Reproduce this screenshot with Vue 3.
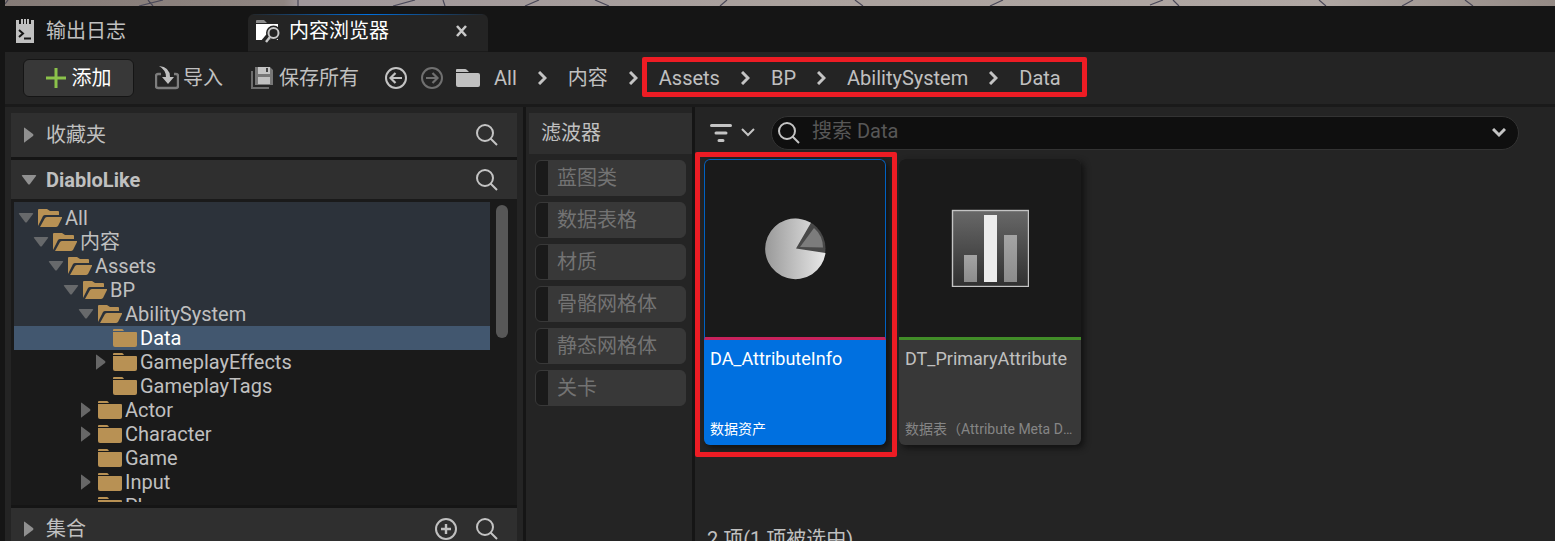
<script setup>
const crumbsRoot = ['All', '内容']
const crumbsPath = ['Assets', 'BP', 'AbilitySystem', 'Data']

const tree = [
  { name: 'All', level: 0, state: 'open' },
  { name: '内容', level: 1, state: 'open' },
  { name: 'Assets', level: 2, state: 'open' },
  { name: 'BP', level: 3, state: 'open' },
  { name: 'AbilitySystem', level: 4, state: 'open' },
  { name: 'Data', level: 5, state: 'leaf', selected: true },
  { name: 'GameplayEffects', level: 5, state: 'closed' },
  { name: 'GameplayTags', level: 5, state: 'leaf' },
  { name: 'Actor', level: 4, state: 'closed' },
  { name: 'Character', level: 4, state: 'closed' },
  { name: 'Game', level: 4, state: 'leaf' },
  { name: 'Input', level: 4, state: 'closed' },
  { name: 'Player', level: 4, state: 'leaf' }
]

const filters = ['蓝图类', '数据表格', '材质', '骨骼网格体', '静态网格体', '关卡']
</script>

<template>
  <div class="shell">
    <svg class="viewport-edge" viewBox="0 0 1550 6" preserveAspectRatio="none" aria-hidden="true">
      <defs>
        <linearGradient id="floor" x1="0" x2="1" y1="0" y2="0">
          <stop offset="0" stop-color="#857b77" />
          <stop offset="0.18" stop-color="#8f8581" />
          <stop offset="0.19" stop-color="#a0979a" />
          <stop offset="0.5" stop-color="#aaa19d" />
          <stop offset="0.85" stop-color="#b0a7a3" />
          <stop offset="1" stop-color="#958b86" />
        </linearGradient>
      </defs>
      <rect width="1550" height="6" fill="url(#floor)" />
      <g stroke="#4a4858" stroke-width="1.2" fill="none">
        <path d="M0 4L3 0M134 6L158 0M143 0L148 6M293 0V6M388 6L410 0M438 0L440 6M520 6L534 0M590 0L604 6M715 6L722 0M850 0L858 6M985 6L998 0M1145 5L1158 0M1168 0L1174 6M1314 0L1321 6M1397 6L1408 0M1460 0L1468 6" />
      </g>
    </svg>

    <nav class="tabs">
      <button class="tab" type="button">
        <svg width="18" height="24" viewBox="0 0 18 24" aria-hidden="true">
          <path d="M0 1h3v4h2V0h2v5h1V0h2v5h1V0h2v5h2V1h3v23H0z" fill="#c0c0c0" />
          <path d="M3 11l4 3.5L3 18M8 19.5h7" stroke="#151515" stroke-width="2" fill="none" />
        </svg>
        <span>输出日志</span>
      </button>
      <div class="tab active">
        <svg width="26" height="26" viewBox="0 0 26 26" aria-hidden="true">
          <path d="M1 5V3q0-1 1-1h7l3 3z" fill="#8c8c8c" />
          <path d="M1 6h22v16H1z" fill="#fff" />
          <circle cx="18.500" cy="15" r="7.500" fill="#242424" />
          <path d="M14 18l-5 6" stroke="#242424" stroke-width="6" />
          <circle cx="18.500" cy="15" r="5" fill="none" stroke="#c8c8c8" stroke-width="2" />
          <path d="M15 19l-4 5" stroke="#c8c8c8" stroke-width="2.400" />
        </svg>
        <span>内容浏览器</span>
        <button class="close" type="button" aria-label="关闭">
          <svg width="12" height="12" viewBox="0 0 12 12"><path d="M1 1l9 10M10 1L1 11" stroke="#c8c8c8" stroke-width="2.600" /></svg>
        </button>
      </div>
    </nav>

    <header class="toolbar">
      <button class="add" type="button">
        <svg width="20" height="20" viewBox="0 0 20 20" aria-hidden="true"><path d="M10 0v20M0 10h20" stroke="#8bc24a" stroke-width="3" /></svg>
        <span>添加</span>
      </button>
      <button class="tool import" type="button">
        <svg width="24" height="24" viewBox="0 0 24 24" aria-hidden="true">
          <path d="M6 8H3q-2 0-2 2v10q0 2 2 2h18q2 0 2-2V10q0-2-2-2h-2" fill="none" stroke="#7d7d7d" stroke-width="2.400" />
          <path d="M4 0q11 1 11 11h4l-6 7-6-7h4q0-7-7-11z" fill="#c0c0c0" />
        </svg>
        <span>导入</span>
      </button>
      <button class="tool save" type="button">
        <svg width="22" height="22" viewBox="0 0 22 22" aria-hidden="true">
          <path d="M1 4v17h17" fill="none" stroke="#6c6c6c" stroke-width="2" />
          <path d="M4 0h15l3 3v15H4z" fill="#777" />
          <path d="M7 0h12v7H7z" fill="#c4c4c4" /><path d="M15 1h2v4h-2z" fill="#444" />
          <path d="M7 10h12v7H7z" fill="#c0c0c0" />
        </svg>
        <span>保存所有</span>
      </button>
      <button class="tool" type="button" aria-label="后退">
        <svg width="24" height="24" viewBox="0 0 24 24" fill="none" stroke="#c4c4c4" stroke-width="2"><circle cx="12" cy="12" r="10" /><path d="M18 12H7M11.500 7L6.500 12l5 5" stroke-width="2.200" /></svg>
      </button>
      <button class="tool forward" type="button" aria-label="前进">
        <svg width="24" height="24" viewBox="0 0 24 24" fill="none" stroke="#707070" stroke-width="2"><circle cx="12" cy="12" r="10" /><path d="M6 12h11M12.500 7l5 5-5 5" stroke-width="2.200" /></svg>
      </button>
      <nav class="crumbs" aria-label="路径">
        <svg class="crumb-folder" width="24" height="18" viewBox="0 0 24 18" aria-hidden="true">
          <path d="M0 3V1q0-1 1-1h8q1 0 2 1l2 2z" fill="#c0c0c0" /><path d="M0 4h22q2 0 2 2v10q0 2-2 2H2q-2 0-2-2z" fill="#c0c0c0" />
        </svg>
        <template v-for="c in crumbsRoot" :key="c">
          <a href="#">{{ c }}</a>
          <svg width="9" height="14" viewBox="0 0 9 14" aria-hidden="true"><path d="M1 1l6 6-6 6" class="chev" /></svg>
        </template>
        <span class="path">
          <template v-for="(c, i) in crumbsPath" :key="c">
            <svg v-if="i" width="9" height="14" viewBox="0 0 9 14" aria-hidden="true"><path d="M1 1l6 6-6 6" class="chev" /></svg>
            <a href="#">{{ c }}</a>
          </template>
        </span>
      </nav>
    </header>

    <main class="body">
      <aside class="sources">
        <section class="section favorites">
          <svg class="mark" width="16" height="16" viewBox="0 0 16 16" aria-hidden="true"><path d="M3 1q0-1 1 0l8 6q1 1 0 2l-8 6q-1 1-1 0z" fill="#909090" /></svg>
          <span class="title">收藏夹</span>
          <button class="icon-btn" type="button" aria-label="搜索收藏夹">
            <svg width="24" height="24" viewBox="0 0 24 24" class="lens"><circle cx="10" cy="10" r="8" /><path d="M15.500 15.500L22 22" /></svg>
          </button>
        </section>
        <section class="section project">
          <svg class="mark" width="16" height="16" viewBox="0 0 16 16" aria-hidden="true"><path d="M1 4q-1-1 1-1h12q2 0 1 1l-6 8q-1 1-2 0z" fill="#909090" /></svg>
          <strong class="title">DiabloLike</strong>
          <button class="icon-btn" type="button" aria-label="搜索路径">
            <svg width="24" height="24" viewBox="0 0 24 24" class="lens"><circle cx="10" cy="10" r="8" /><path d="M15.500 15.500L22 22" /></svg>
          </button>
        </section>
        <div class="tree-wrap">
          <ul class="tree" role="tree">
            <li
              v-for="n in tree"
              :key="n.name"
              role="treeitem"
              :aria-selected="!!n.selected"
              :class="['node', n.state, { selected: n.selected }]"
              :style="{ paddingLeft: 4 + n.level * 15 + 'px' }"
            >
              <svg class="mark" width="16" height="16" viewBox="0 0 16 16" aria-hidden="true">
                <path v-if="n.state === 'open'" d="M1 4q-1-1 1-1h12q2 0 1 1l-6 8q-1 1-2 0z" fill="#67696b" />
                <path v-else-if="n.state === 'closed'" d="M3 1q0-1 1 0l8 6q1 1 0 2l-8 6q-1 1-1 0z" fill="#676767" />
              </svg>
              <svg class="folder" width="24" height="18" viewBox="0 0 24 18" aria-hidden="true" fill="#b89154">
                <template v-if="n.state === 'open'">
                  <path d="M0 17V1q0-1 1-1h8l3 2h8q1 0 1 1v3H7q-1 0-2 1z" /><path d="M2 18L7 9q1-1 2-1h14q2 0 1 1l-4 8q-1 1-2 1z" />
                </template>
                <template v-else>
                  <path d="M0 2V1q0-1 1-1h8q1 0 2 2z" /><path d="M0 3h23q1 0 1 1v12q0 2-2 2H2q-2 0-2-2z" />
                </template>
              </svg>
              <span>{{ n.name }}</span>
            </li>
          </ul>
          <div class="scroll-rail"><div class="thumb-bar"></div></div>
        </div>
        <section class="section collections">
          <svg class="mark" width="16" height="16" viewBox="0 0 16 16" aria-hidden="true"><path d="M3 1q0-1 1 0l8 6q1 1 0 2l-8 6q-1 1-1 0z" fill="#909090" /></svg>
          <span class="title">集合</span>
          <button class="icon-btn" type="button" aria-label="添加集合">
            <svg width="24" height="24" viewBox="0 0 24 24" fill="none" stroke="#c0c0c0" stroke-width="2"><circle cx="12" cy="12" r="10" /><path d="M12 7v10M7 12h10" stroke-width="2.400" /></svg>
          </button>
          <button class="icon-btn" type="button" aria-label="搜索集合">
            <svg width="24" height="24" viewBox="0 0 24 24" class="lens"><circle cx="10" cy="10" r="8" /><path d="M15.500 15.500L22 22" /></svg>
          </button>
        </section>
      </aside>

      <aside class="filters">
        <h2>滤波器</h2>
        <div class="filter-list">
          <button v-for="f in filters" :key="f" class="filter" type="button" aria-pressed="false">{{ f }}</button>
        </div>
      </aside>

      <section class="assets">
        <div class="search-row">
          <button class="filter-menu" type="button" aria-label="筛选">
            <svg width="22" height="18" viewBox="0 0 22 18" stroke="#c4c4c4" stroke-width="3" stroke-linecap="round"><path d="M1.500 1.500h19M6 9h10M9 16.500h4" /></svg>
            <svg width="14" height="10" viewBox="0 0 14 10"><path d="M1 1l6 6 6-6" class="chev thin" /></svg>
          </button>
          <div class="search">
            <svg width="24" height="24" viewBox="0 0 24 24" class="lens" aria-hidden="true"><circle cx="10" cy="10" r="8" /><path d="M15.500 15.500L22 22" /></svg>
            <input type="text" placeholder="搜索 Data" aria-label="搜索 Data" />
            <button type="button" aria-label="搜索选项">
              <svg width="14" height="10" viewBox="0 0 14 10"><path d="M1 1l6 6 6-6" class="chev" /></svg>
            </button>
          </div>
        </div>

        <div class="cards">
          <div class="marked">
            <button class="card chosen" type="button">
              <span class="preview">
                <svg width="62" height="62" viewBox="0 0 62 62" aria-hidden="true">
                  <defs>
                    <linearGradient id="pie" x1="0" x2="1" y1="0" y2="0"><stop offset="0" stop-color="#999" /><stop offset="1" stop-color="#e8e8e8" /></linearGradient>
                  </defs>
                  <circle cx="31.500" cy="30.500" r="30" fill="#484848" />
                  <path d="M32 30.500L47 4.800A30.300 30.300 0 1 0 61.500 35z" fill="url(#pie)" />
                  <path d="M36 29L50 10A26 26 0 0 1 59 29.500z" fill="#7c7c7c" />
                </svg>
              </span>
              <span class="info">
                <span class="name">DA_AttributeInfo</span>
                <span class="kind">数据资产</span>
              </span>
            </button>
          </div>
          <button class="card table-card" type="button">
            <span class="preview">
              <svg width="78" height="78" viewBox="0 0 78 78" aria-hidden="true">
                <defs>
                  <linearGradient id="panel" x1="0" x2="0" y1="0" y2="1"><stop offset="0" stop-color="#686868" /><stop offset="1" stop-color="#303030" /></linearGradient>
                  <linearGradient id="bar" x1="0" x2="0" y1="0" y2="1"><stop offset="0" stop-color="#a4a4a4" /><stop offset="1" stop-color="#8c8c8c" /></linearGradient>
                </defs>
                <rect x="1.500" y="1.500" width="76" height="76" fill="url(#panel)" stroke="#c4c4c4" stroke-width="1.400" />
                <rect x="13" y="46" width="13" height="27" fill="url(#bar)" />
                <rect x="33" y="6" width="13" height="67" fill="#ececec" />
                <rect x="53" y="26" width="13" height="47" fill="url(#bar)" />
              </svg>
            </span>
            <span class="info">
              <span class="name">DT_PrimaryAttribute</span>
              <span class="kind">数据表（Attribute Meta Data）</span>
            </span>
          </button>
        </div>
        <p class="status">2 项(1 项被选中)</p>
      </section>
    </main>
  </div>
</template>

<style>
body {
  background: #151515;
  overflow: hidden;
}
</style>

<style scoped>
.shell {
  box-sizing: border-box;
  height: 100vh;
  padding-left: 5px;
  display: flex;
  flex-direction: column;
  overflow: hidden;
  background: #151515;
  color: #c0c0c0;
  font: 20px/24px Roboto, "Noto Sans CJK SC", sans-serif;
}
button {
  border: 0;
  padding: 0;
  margin: 0;
  background: none;
  color: inherit;
  font: inherit;
  text-align: left;
}
a {
  color: inherit;
  text-decoration: none;
}
svg {
  display: block;
  flex: none;
}
.chev {
  fill: none;
  stroke: #c4c4c4;
  stroke-width: 3;
}
.thin {
  stroke-width: 2;
}
.lens {
  fill: none;
  stroke: #c4c4c4;
  stroke-width: 2;
}

.viewport-edge {
  width: 100%;
  height: 6px;
}
.tabs {
  height: 46px;
  flex: none;
  display: flex;
  align-items: flex-end;
}
.tab {
  box-sizing: border-box;
  width: 243px;
  height: 38px;
  padding: 0 11px 4px;
  display: flex;
  align-items: center;
  gap: 12px;
}
.active {
  position: relative;
  width: 240px;
  padding: 0 20px 4px 7px;
  gap: 8px;
  border-radius: 6px 6px 0 0;
  background: #242424;
  border-bottom: 1px solid #1b1b1b;
  color: #fff;
  overflow: hidden;
}
.active::before {
  content: "";
  position: absolute;
  inset: 0 0 auto;
  height: 1px;
  background: linear-gradient(90deg, transparent, #0070e0, transparent);
}
.close {
  margin-left: auto;
}

.toolbar {
  box-sizing: border-box;
  height: 55px;
  flex: none;
  display: flex;
  align-items: center;
  padding-left: 18px;
  background: #242424;
  border-bottom: 3px solid #1a1a1a;
}
.add {
  box-sizing: border-box;
  width: 111px;
  height: 38px;
  display: flex;
  align-items: center;
  justify-content: center;
  gap: 6px;
  border: 1px solid #151515;
  border-radius: 6px;
  background: #383838;
  color: #fff;
}
.tool {
  display: flex;
  align-items: center;
  gap: 4px;
}
.import {
  margin-left: 21px;
}
.save {
  margin: 0 25px 0 28px;
  gap: 6px;
}
.forward {
  margin: 0 12px;
}
.crumbs,
.path {
  display: flex;
  align-items: center;
  gap: 21px;
}
.crumb-folder {
  margin-right: -7px;
}
.path {
  position: relative;
}
.path::after {
  content: "";
  position: absolute;
  inset: -9px -26px -7px -17px;
  border: 5px solid #ed1c24;
  border-radius: 2px;
  pointer-events: none;
}

.body {
  flex: 1;
  display: flex;
  min-height: 0;
  background: #242424;
}
.sources {
  box-sizing: border-box;
  width: 521px;
  flex: none;
  padding: 6px 6px 0;
  border-right: 3px solid #151515;
}
.section {
  box-sizing: border-box;
  display: flex;
  align-items: center;
  gap: 17px;
  padding: 0 18px 0 10px;
  background: #2f2f2f;
}
.favorites {
  height: 47px;
  border-bottom: 3px solid #151515;
}
.project {
  height: 39px;
}
.collections {
  height: 41px;
}
.title {
  margin-right: auto;
  margin-left: -8px;
}
.tree-wrap {
  display: flex;
  height: 300px;
  padding: 3px 9px 3px 3px;
  gap: 6px;
  background: #1a1a1a;
  border-bottom: 3px solid #151515;
}
.tree {
  flex: 1;
  margin: 0;
  padding: 0;
  list-style: none;
  overflow: hidden;
}
.node {
  display: flex;
  align-items: center;
  height: 24px;
}
.node.open {
  background: #2c323a;
}
.node:first-child {
  padding-top: 4px;
}
.node.selected {
  background: #42576f;
  color: #fff;
}
.folder {
  margin: 0 3px 0 4px;
}
.scroll-rail {
  width: 12px;
  padding-top: 3px;
}
.thumb-bar {
  height: 133px;
  border-radius: 6px;
  background: #575757;
}

.filters {
  box-sizing: border-box;
  width: 169px;
  flex: none;
  padding: 6px 0 0 3px;
  border-right: 3px solid #151515;
}
h2 {
  margin: 0;
  padding: 8px 12px 9px;
  font-size: 20px;
  font-weight: 400;
  background: #2f2f2f;
}
.filter-list {
  display: flex;
  flex-direction: column;
  gap: 6px;
  padding: 6px;
}
.filter {
  box-sizing: border-box;
  height: 36px;
  padding-left: 21px;
  border: 1px solid #383838;
  border-radius: 6px;
  background: linear-gradient(90deg, #1a1a1a 12px, #383838 12px);
  color: #737373;
}

.assets {
  flex: 1;
  min-width: 0;
}
.search-row {
  display: flex;
  align-items: center;
  gap: 16px;
  padding: 9px 36px 9px 15px;
}
.filter-menu {
  display: flex;
  align-items: center;
  gap: 9px;
}
.search {
  box-sizing: border-box;
  flex: 1;
  height: 34px;
  display: flex;
  align-items: center;
  gap: 11px;
  padding: 0 12px 0 5px;
  border: 1px solid #333;
  border-radius: 17px;
  background: #0f0f0f;
}
.search input {
  flex: 1;
  min-width: 0;
  padding: 0 0 4px;
  border: 0;
  outline: 0;
  background: none;
  color: #c0c0c0;
  font: inherit;
}
.search input::placeholder {
  color: #575757;
  opacity: 1;
}
.cards {
  display: flex;
  align-items: flex-start;
  gap: 13px;
  min-height: 368px;
  padding-left: 9px;
}
.marked {
  position: relative;
}
.marked::after {
  content: "";
  position: absolute;
  inset: -7px -11px -12px -9px;
  border: 5px solid #ed1c24;
  border-radius: 2px;
  pointer-events: none;
}
.card {
  width: 182px;
  display: flex;
  flex-direction: column;
  border-radius: 6px;
  overflow: hidden;
  background: #383838;
  box-shadow: 3px 3px 6px #111;
}
.preview {
  box-sizing: border-box;
  height: 181px;
  display: flex;
  align-items: center;
  justify-content: center;
  background: #1a1a1a;
  border-bottom: 3px solid #418c28;
}
.chosen .preview {
  border: 1px solid #0061c2;
  border-bottom: 3px solid #c8235c;
  border-radius: 6px 6px 0 0;
}
.info {
  box-sizing: border-box;
  height: 105px;
  padding: 7px 6px 4px;
  display: flex;
  flex-direction: column;
  justify-content: space-between;
}
.chosen .info {
  background: #0070e0;
  color: #fff;
}
.name {
  font-size: 18px;
}
.kind {
  font-size: 14px;
  color: #858585;
  white-space: nowrap;
  overflow: hidden;
  text-overflow: ellipsis;
}
.chosen .kind {
  color: #fff;
}
.status {
  margin: 0;
  padding-left: 12px;
}
</style>
